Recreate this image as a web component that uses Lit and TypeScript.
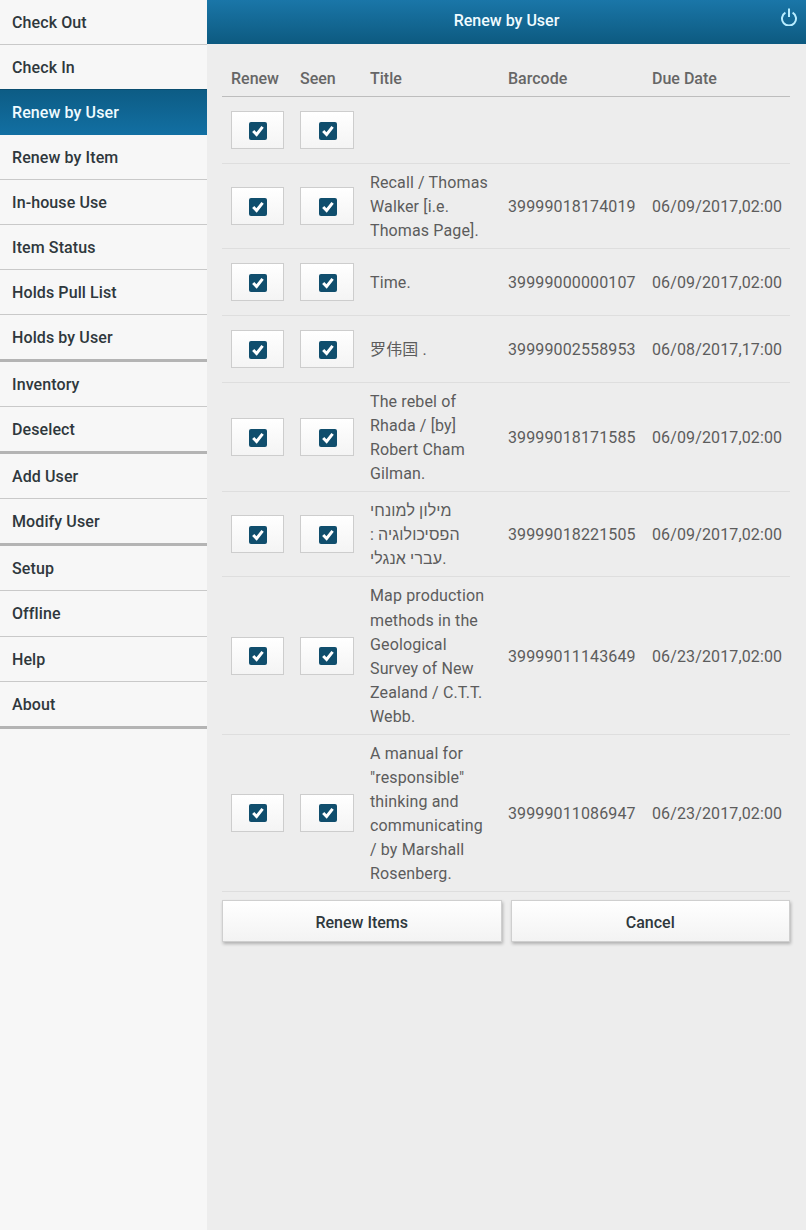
import { LitElement, html, css, svg } from "lit";
import { customElement } from "lit/decorators.js";

const NAV: { label: string; active?: boolean; end?: boolean; tall?: boolean }[] = [
  { label: "Check Out" },
  { label: "Check In" },
  { label: "Renew by User", active: true },
  { label: "Renew by Item" },
  { label: "In-house Use" },
  { label: "Item Status" },
  { label: "Holds Pull List" },
  { label: "Holds by User", end: true },
  { label: "Inventory" },
  { label: "Deselect", end: true },
  { label: "Add User" },
  { label: "Modify User", end: true },
  { label: "Setup" },
  { label: "Offline", tall: true },
  { label: "Help" },
  { label: "About", end: true },
];

const ROWS = [
  ["", "", ""],
  ["Recall / Thomas Walker [i.e. Thomas Page].", "39999018174019", "06/09/2017,02:00"],
  ["Time.", "39999000000107", "06/09/2017,02:00"],
  ["罗伟国 .", "39999002558953", "06/08/2017,17:00"],
  ["The rebel of Rhada / [by] Robert Cham Gilman.", "39999018171585", "06/09/2017,02:00"],
  ["מילון למונחי הפסיכולוגיה : עברי אנגלי.", "39999018221505", "06/09/2017,02:00"],
  ["Map production methods in the Geological Survey of New Zealand / C.T.T. Webb.", "39999011143649", "06/23/2017,02:00"],
  ['A manual for "responsible" thinking and communicating / by Marshall Rosenberg.', "39999011086947", "06/23/2017,02:00"],
];

const check = svg`<svg class="check" viewBox="0 0 18 18" aria-hidden="true"><path d="M4.2 9 7.6 12.5 13.6 4.9" fill="none" stroke="#fff" stroke-width="3"/></svg>`;

@customElement("app-root")
export class AppRoot extends LitElement {
  static styles = css`
    :host {
      display: flex;
      min-height: 100vh;
      background: #ededed;
      font-family: Roboto, "Liberation Sans", "Noto Sans CJK SC", sans-serif;
      font-size: 16px;
    }
    .side {
      width: 207px;
      flex: none;
      background: #f7f7f7;
    }
    .item {
      height: 44px;
      line-height: 46px;
      padding-left: 12px;
      font-weight: 500;
      letter-spacing: 0.1px;
      color: #2f383d;
      border-bottom: 1px solid #c9c9c9;
    }
    .item.tall {
      height: 45px;
    }
    .item.end {
      border-bottom: 3px solid #b4b4b4;
    }
    .item.active {
      color: #f0fbff;
      background: linear-gradient(#0d5c85, #126fa2);
      border-bottom-color: #126fa2;
      border-top: 1px solid #0a4d70;
      margin-top: -1px;
    }
    .main {
      flex: 1;
      min-width: 0;
    }
    .bar {
      height: 40px;
      padding-bottom: 4px;
      display: flex;
      align-items: center;
      justify-content: center;
      position: relative;
      color: #f0fbff;
      font-weight: 500;
      background: linear-gradient(#1a76a8, #0d5a80);
    }
    .power {
      position: absolute;
      top: 8px;
      right: 8px;
      width: 18px;
      height: 18px;
    }
    .content {
      padding: 16px 16px 0 15px;
    }
    table {
      width: 100%;
      table-layout: fixed;
      border-collapse: collapse;
    }
    th {
      height: 36px;
      padding: 0 0 0 9px;
      text-align: left;
      font-weight: 500;
      color: #666;
      border-bottom: 1px solid #bdbdbd;
    }
    td {
      padding: 7px 0 5px 9px;
      line-height: 24.05px;
      color: #5c5c5c;
      letter-spacing: 0.13px;
      border-bottom: 1px solid #dedede;
    }
    td.title {
      padding-right: 9px;
    }
    td.tick {
      padding-top: 14px;
      padding-bottom: 14px;
    }
    .box {
      width: 53px;
      height: 38px;
      box-sizing: border-box;
      padding-top: 1px;
      display: flex;
      align-items: center;
      justify-content: center;
      background: linear-gradient(#ffffff, #f4f4f4);
      border: 1px solid #cdcdcd;
    }
    .seen .box {
      width: 54px;
      padding-left: 2px;
    }
    .tickmark {
      width: 18px;
      height: 18px;
      border-radius: 2px;
      background: #104e6d;
    }
    .check {
      display: block;
      width: 18px;
      height: 18px;
    }
    .actions {
      display: flex;
      gap: 9px;
      margin-top: 8px;
    }
    button {
      flex: 1;
      height: 42px;
      padding: 2px 0 0;
      font: inherit;
      font-weight: 500;
      color: #2f383d;
      background: linear-gradient(#ffffff, #f3f3f3);
      border: 1px solid #cfcfcf;
      box-shadow: 1px 2px 3px rgba(0, 0, 0, 0.25);
    }
  `;

  private tick(cls: string) {
    return html`<td class="tick ${cls}"><div class="box"><div class="tickmark">${check}</div></div></td>`;
  }

  render() {
    return html`
      <nav class="side">
        ${NAV.map(
          (n) => html`<div class="item ${n.active ? "active" : ""} ${n.end ? "end" : ""} ${n.tall ? "tall" : ""}">${n.label}</div>`
        )}
      </nav>
      <div class="main">
        <header class="bar">
          Renew by User
          <svg class="power" viewBox="0 0 18 18" aria-hidden="true">
            <path d="M5.4 4.6A7 7 0 1 0 12.6 4.6M9 0.5V9" fill="none" stroke="#b8edff" stroke-width="2"/>
          </svg>
        </header>
        <div class="content">
          <table>
            <colgroup>
              <col style="width:69px" /><col style="width:70px" /><col style="width:138px" /><col style="width:144px" /><col style="width:147px" />
            </colgroup>
            <thead>
              <tr><th>Renew</th><th>Seen</th><th>Title</th><th>Barcode</th><th>Due Date</th></tr>
            </thead>
            <tbody>
              ${ROWS.map(
                (r) => html`<tr>
                  ${this.tick("renew")}${this.tick("seen")}
                  <td class="title">${r[0]}</td>
                  <td>${r[1]}</td>
                  <td>${r[2]}</td>
                </tr>`
              )}
            </tbody>
          </table>
          <div class="actions">
            <button>Renew Items</button>
            <button>Cancel</button>
          </div>
        </div>
      </div>
    `;
  }
}
